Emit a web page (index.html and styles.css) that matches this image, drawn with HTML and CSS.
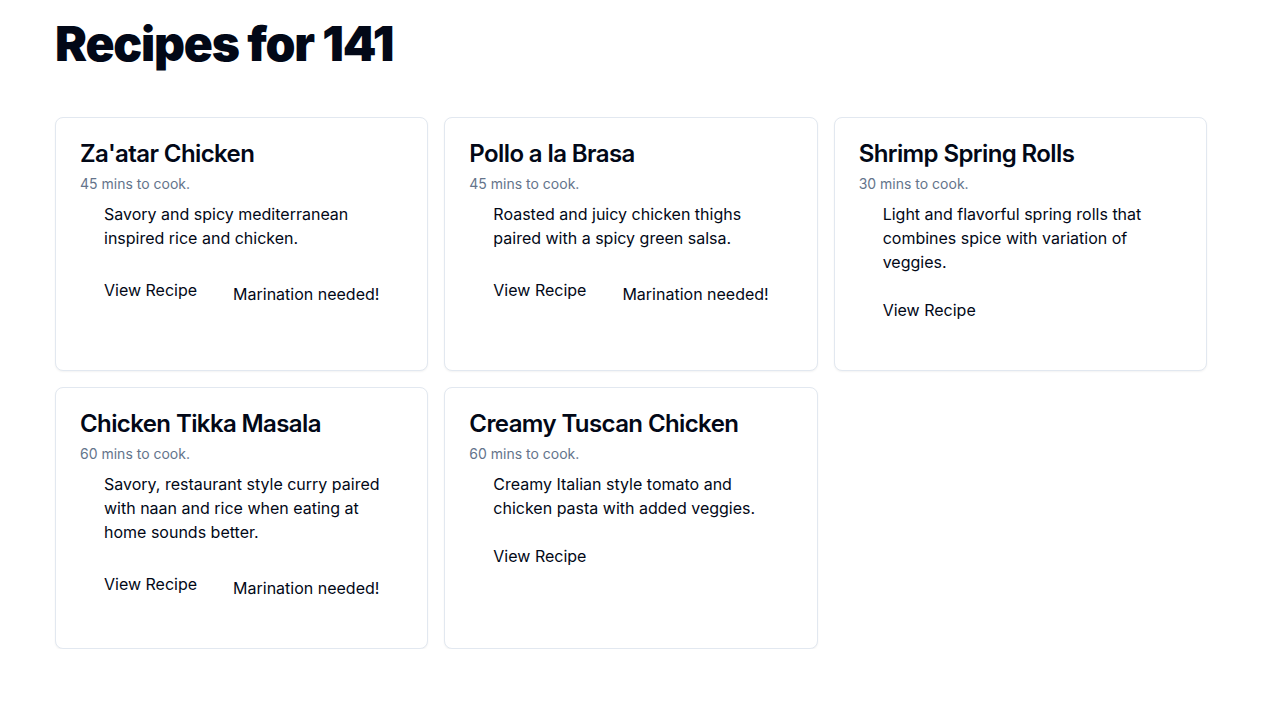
FILE: index.html
```html
<!DOCTYPE html>
<html lang="en">
<head>
<meta charset="utf-8">
<title>Recipes for 141</title>
<link rel="stylesheet" href="styles.css">
</head>
<body>
<main class="page">
  <h1 class="page-title">Recipes for 141</h1>
  <div class="grid">
    <article class="card">
      <h2 class="card-title">Za'atar Chicken</h2>
      <p class="card-meta">45 mins to cook.</p>
      <p class="card-desc">Savory and spicy mediterranean inspired rice and chicken.</p>
      <div class="card-footer">
        <span class="btn">View Recipe</span>
        <span class="badge">Marination needed!</span>
      </div>
    </article>
    <article class="card">
      <h2 class="card-title">Pollo a la Brasa</h2>
      <p class="card-meta">45 mins to cook.</p>
      <p class="card-desc">Roasted and juicy chicken thighs paired with a spicy green salsa.</p>
      <div class="card-footer">
        <span class="btn">View Recipe</span>
        <span class="badge">Marination needed!</span>
      </div>
    </article>
    <article class="card">
      <h2 class="card-title">Shrimp Spring Rolls</h2>
      <p class="card-meta">30 mins to cook.</p>
      <p class="card-desc">Light and flavorful spring rolls that combines spice with variation of veggies.</p>
      <div class="card-footer">
        <span class="btn">View Recipe</span>
      </div>
    </article>
    <article class="card">
      <h2 class="card-title">Chicken Tikka Masala</h2>
      <p class="card-meta">60 mins to cook.</p>
      <p class="card-desc">Savory, restaurant style curry paired with naan and rice when eating at home sounds better.</p>
      <div class="card-footer">
        <span class="btn">View Recipe</span>
        <span class="badge">Marination needed!</span>
      </div>
    </article>
    <article class="card">
      <h2 class="card-title">Creamy Tuscan Chicken</h2>
      <p class="card-meta">60 mins to cook.</p>
      <p class="card-desc">Creamy Italian style tomato and chicken pasta with added veggies.</p>
      <div class="card-footer">
        <span class="btn">View Recipe</span>
      </div>
    </article>
  </div>
</main>
</body>
</html>
```

FILE: styles.css
```css
* { box-sizing: border-box; }
html, body { margin: 0; padding: 0; background: #ffffff; }
body {
  font-family: Inter, "Noto Sans", sans-serif;
  color: #020817;
}
.page {
  width: 1152px;
  margin-left: 55px;
  padding-top: 14px;
}
.page-title {
  margin: 0;
  font-size: 48px;
  line-height: 60px;
  font-weight: 900;
  letter-spacing: -0.025em;
  color: #020817;
}
.grid {
  margin-top: 43px;
  display: grid;
  grid-template-columns: repeat(3, 1fr);
  gap: 16px;
}
.card {
  border: 1px solid #e2e8f0;
  border-radius: 8px;
  box-shadow: 0 1px 2px rgba(0,0,0,0.05);
  background: #fff;
  padding: 24px 24px 40px 24px;
}
.card-title {
  margin: 0;
  font-size: 24px;
  line-height: 24px;
  font-weight: 600;
  letter-spacing: -0.025em;
}
.card-meta {
  margin: 8px 0 0 0;
  font-size: 14px;
  line-height: 20px;
  color: #64748b;
}
.card-desc {
  margin: 8px 0 0 0;
  padding-left: 24px;
  font-size: 16px;
  line-height: 24px;
}
.card-footer {
  margin-top: 16px;
  padding-left: 24px;
  display: flex;
  align-items: center;
}
.btn {
  display: block;
  padding: 8px 0;
  font-size: 16px;
  line-height: 24px;
}
.badge {
  display: block;
  margin-left: 36px;
  padding: 16px 0 8px 0;
  font-size: 16px;
  line-height: 24px;
}
```
